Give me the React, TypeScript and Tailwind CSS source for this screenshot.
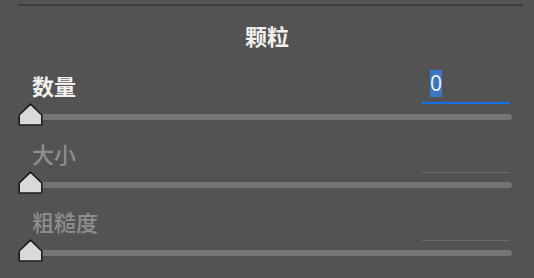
const FONT = "font-['Noto_Sans_CJK_SC','Noto_Sans',sans-serif]";

type Row = { label: string; active: boolean };

const rows: Row[] = [
  { label: "数量", active: true },
  { label: "大小", active: false },
  { label: "粗糙度", active: false },
];

function Thumb() {
  return (
    <svg width="25" height="23" viewBox="0 0 25 23" className="absolute left-0 top-0">
      <path
        d="M1.2 12 L12.5 1.2 L23.8 12 L23.8 22 L1.2 22 Z"
        fill="#d9d9d9"
        stroke="#1b1b1b"
        strokeWidth="1.6"
        strokeLinejoin="round"
      />
    </svg>
  );
}

function SliderRow({ label, active }: Row) {
  return (
    <div className="flex flex-col">
      {/* label + value field */}
      <div className="flex h-[34px] items-start justify-between">
        <span
          className={`mt-[4px] ml-[14px] text-[22px] leading-[22px] ${
            active ? "font-bold text-[#f0f0f0]" : "font-medium text-[#8e8e8e]"
          }`}
        >
          {label}
        </span>
        {active ? (
          <div className="mr-[2px] h-[34px] w-[88px] border-b-2 border-[#1473e6] pl-[8px]">
            <span className="inline-block bg-[#3a76c4] font-['Open_Sans',sans-serif] text-[21px] leading-[27px] text-[#f4f4f4]">
              0
            </span>
          </div>
        ) : (
          <div className="mr-[2px] h-[35px] w-[88px] border-b border-[#6c6c6c]" />
        )}
      </div>
      {/* slider */}
      <div className="relative -mt-px h-[23px]">
        <div className="pt-[11px] pl-[12px]">
          <div className="h-[6px] rounded-full bg-[#747474]" />
        </div>
        <Thumb />
      </div>
    </div>
  );
}

export default function App() {
  return (
    <div className={`h-[278px] w-[534px] overflow-hidden bg-[#535353] ${FONT}`}>
      <div className="pt-[4px]">
        <div className="ml-[18px] mr-[11px] h-[2px] bg-[#3c3c3c]" />
      </div>
      <div className="mt-[18px] text-center text-[22px] leading-[22px] font-bold text-[#f0f0f0]">
        颗粒
      </div>
      <div className="mt-[24px] flex flex-col gap-[12px] pl-[18px] pr-[22px]">
        {rows.map((r) => (
          <SliderRow key={r.label} {...r} />
        ))}
      </div>
    </div>
  );
}
